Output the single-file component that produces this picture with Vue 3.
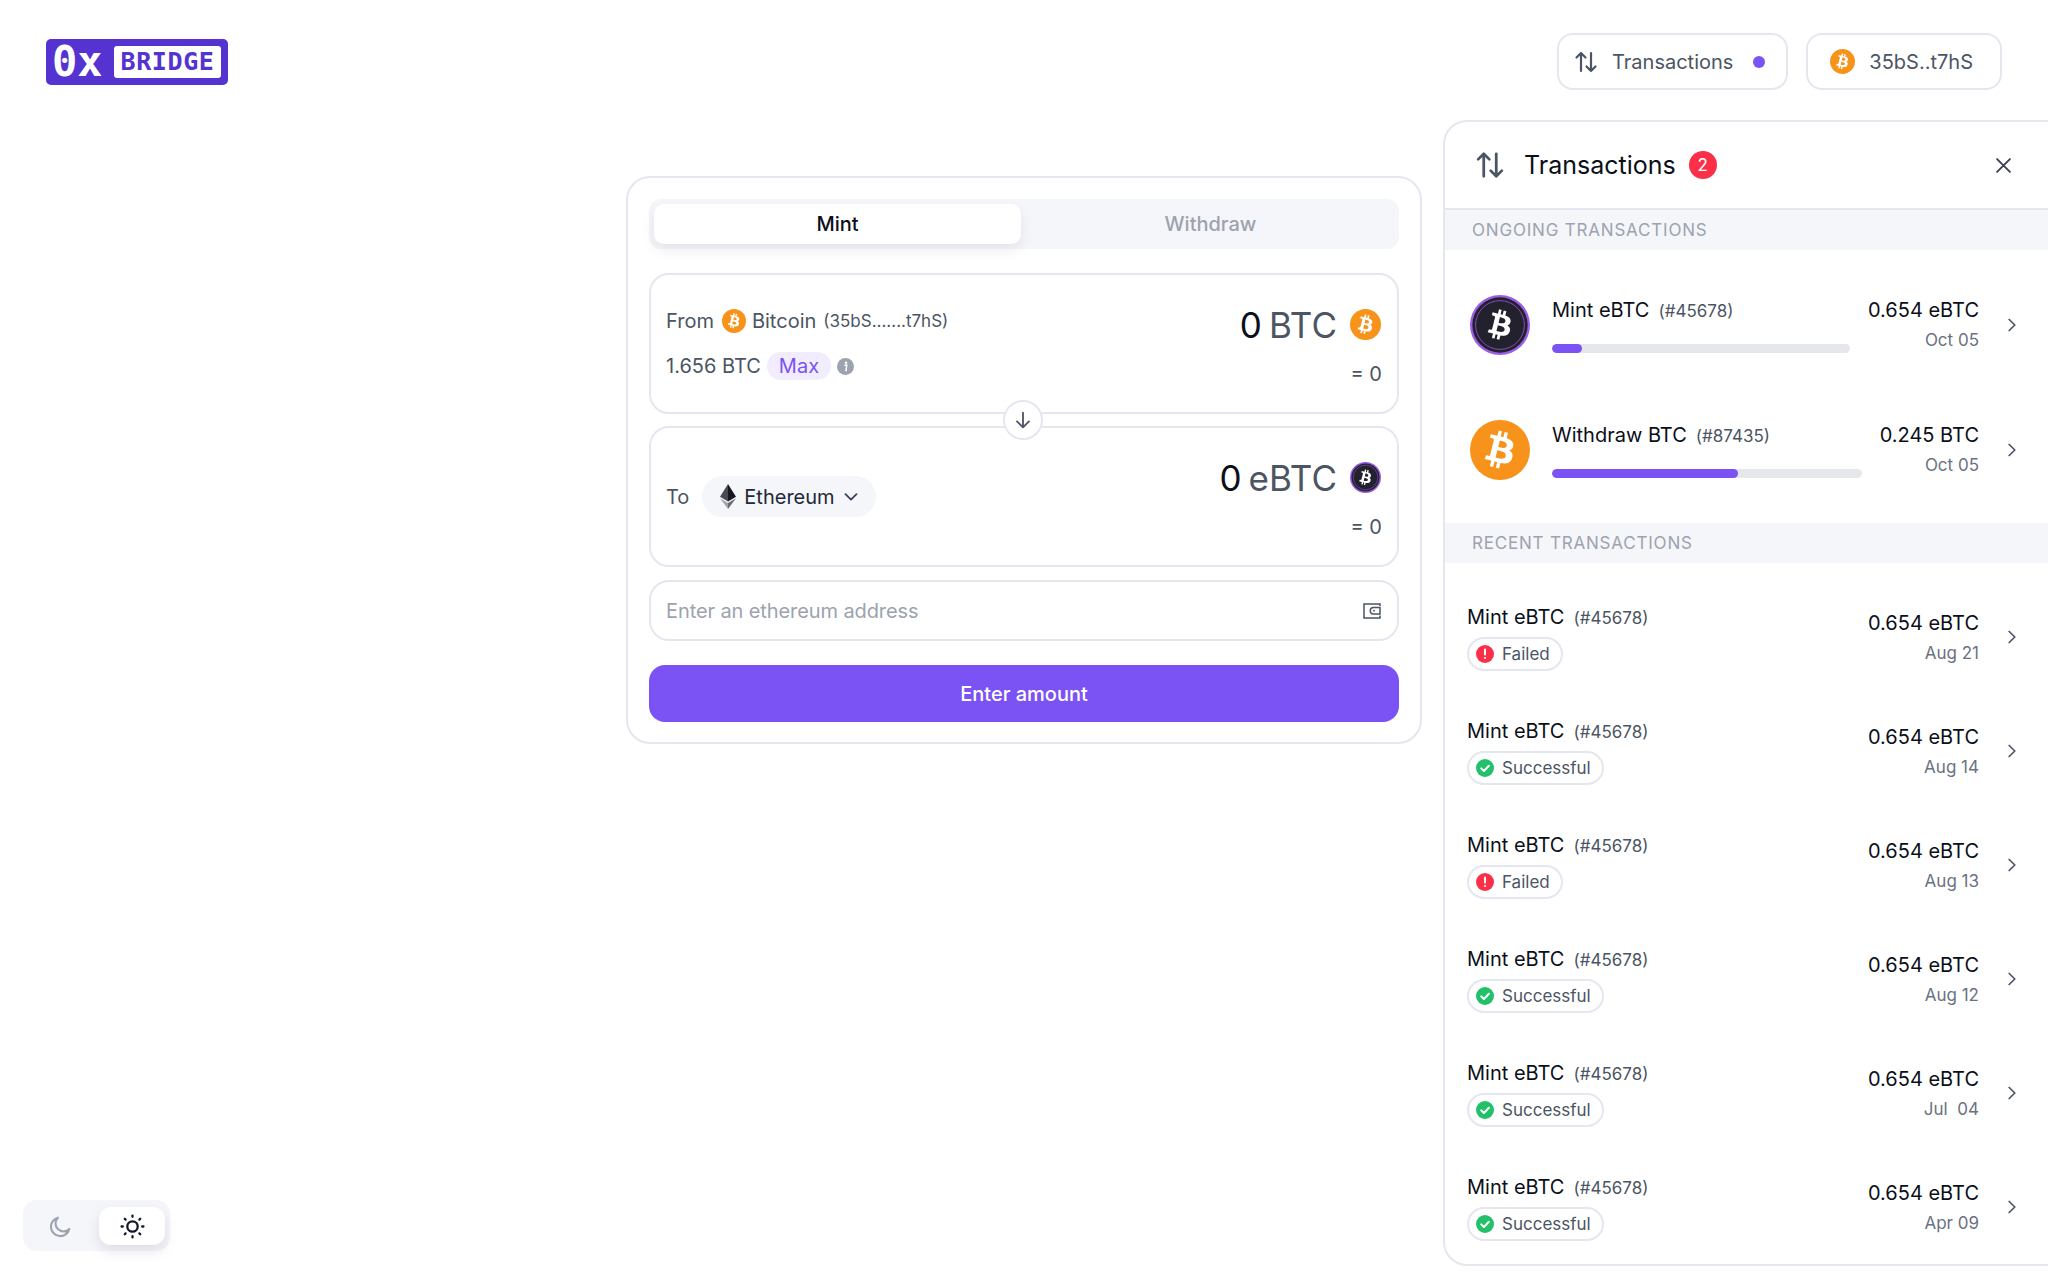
<script setup>
const btcMark = 'M46.11 27.441c.636-4.258-2.606-6.547-7.039-8.074l1.438-5.768-3.512-.875-1.4 5.616c-.922-.23-1.87-.447-2.812-.662l1.41-5.653-3.509-.875-1.439 5.766c-.764-.174-1.514-.346-2.242-.527l.004-.018-4.842-1.209-.934 3.75s2.605.597 2.55.634c1.422.355 1.68 1.296 1.636 2.042l-1.638 6.571c.098.025.225.061.365.117l-.37-.092-2.297 9.205c-.174.432-.615 1.08-1.609.834.035.051-2.552-.637-2.552-.637l-1.743 4.02 4.57 1.139c.85.213 1.683.436 2.502.646l-1.453 5.835 3.507.875 1.44-5.772c.957.26 1.887.5 2.797.726L27.504 50.8l3.511.875 1.453-5.823c5.987 1.133 10.49.676 12.383-4.738 1.527-4.36-.075-6.875-3.225-8.516 2.294-.531 4.022-2.04 4.483-5.157zM38.087 38.69c-1.086 4.36-8.426 2.004-10.807 1.412l1.928-7.729c2.38.594 10.011 1.77 8.88 6.317zm1.085-11.312c-.99 3.966-7.1 1.951-9.083 1.457l1.748-7.01c1.983.494 8.367 1.416 7.335 5.553z'

const ongoing = [
  { id: 1, title: 'Mint eBTC', ref: '(#45678)', amount: '0.654 eBTC', date: 'Oct 05', progress: 10, coin: 'ebtc' },
  { id: 2, title: 'Withdraw BTC', ref: '(#87435)', amount: '0.245 BTC', date: 'Oct 05', progress: 60, coin: 'btc' }
]

const recent = [
  { id: 1, status: 'Failed', date: 'Aug 21' },
  { id: 2, status: 'Successful', date: 'Aug 14' },
  { id: 3, status: 'Failed', date: 'Aug 13' },
  { id: 4, status: 'Successful', date: 'Aug 12' },
  { id: 5, status: 'Successful', date: 'Jul  04' },
  { id: 6, status: 'Successful', date: 'Apr 09' }
]
</script>

<template>
  <div class="page">
    <header class="topbar">
      <div class="logo">
        <span class="logo-mark">0x</span>
        <span class="logo-word">BRIDGE</span>
      </div>
      <div class="topbar-actions">
        <button class="top-btn">
          <svg class="arrows-sm" viewBox="0 0 24 24" fill="none" stroke="currentColor" stroke-width="2.2" stroke-linecap="round" stroke-linejoin="round">
            <path d="M7 21V3M2.5 7.5 7 3l4.5 4.5M17 3v18M12.5 16.5 17 21l4.5-4.5" />
          </svg>
          <span class="top-label">Transactions</span>
          <span class="top-dot"></span>
        </button>
        <button class="top-btn wallet-btn">
          <svg class="coin-25" viewBox="0 0 64 64"><circle cx="32" cy="32" r="32" fill="#f7931a" /><path :d="btcMark" fill="#fff" /></svg>
          <span>35bS..t7hS</span>
        </button>
      </div>
    </header>

    <main class="main">
      <section class="card">
        <div class="tabs">
          <div class="tab is-active">Mint</div>
          <div class="tab">Withdraw</div>
        </div>

        <div class="box">
          <div class="box-left">
            <div class="line">
              <span>From</span>
              <svg class="from-coin" viewBox="0 0 64 64"><circle cx="32" cy="32" r="32" fill="#f7931a" /><path :d="btcMark" fill="#fff" /></svg>
              <span>Bitcoin</span>
              <span class="addr">(35bS.......t7hS)</span>
            </div>
            <div class="line balance">
              <span>1.656 BTC</span>
              <span class="max">Max</span>
              <svg class="info" viewBox="0 0 20 20">
                <circle cx="10" cy="10" r="10" fill="#9ca3af" />
                <circle cx="10.6" cy="5.6" r="1.5" fill="#fff" />
                <path d="M8.6 8.6h2.9l-1 6.2h1.1" fill="none" stroke="#fff" stroke-width="1.7" />
              </svg>
            </div>
          </div>
          <div class="box-right">
            <div class="value">
              <b>0</b><span>BTC</span>
              <svg class="coin-30" viewBox="0 0 64 64"><circle cx="32" cy="32" r="32" fill="#f7931a" /><path :d="btcMark" fill="#fff" /></svg>
            </div>
            <div class="approx">= 0</div>
          </div>
        </div>

        <div class="swap-wrap">
          <div class="swap">
            <svg viewBox="0 0 24 24" fill="none" stroke="#4b5563" stroke-width="2" stroke-linecap="round" stroke-linejoin="round">
              <path d="M12 4v16M5.5 13.5 12 20l6.5-6.5" />
            </svg>
          </div>
        </div>

        <div class="box">
          <div class="line to-line">
            <span>To</span>
            <div class="chain">
              <svg class="eth" viewBox="0 0 16 25">
                <path d="M8 0 0 12.7l8 4.7z" fill="#4a4a55" />
                <path d="M8 0l8 12.7-8 4.7z" fill="#17171f" />
                <path d="M0 14.3 8 25v-6z" fill="#a3a3ad" />
                <path d="M16 14.3 8 25v-6z" fill="#6b6b76" />
              </svg>
              <span>Ethereum</span>
              <svg class="chev-down" viewBox="0 0 14 8" fill="none" stroke="#374151" stroke-width="1.8" stroke-linecap="round" stroke-linejoin="round">
                <path d="M1.5 1.2 7 6.6l5.5-5.4" />
              </svg>
            </div>
          </div>
          <div class="box-right">
            <div class="value">
              <b>0</b><span>eBTC</span>
              <svg class="coin-30" viewBox="0 0 64 64">
                <circle cx="32" cy="32" r="32" fill="#9b5de5" />
                <circle cx="32" cy="32" r="29" fill="#24212f" />
                <circle cx="32" cy="32" r="25.5" fill="none" stroke="#9b5de5" stroke-width="1" />
                <path :d="btcMark" fill="#fff" transform="translate(6.4 6.4) scale(.8)" />
              </svg>
            </div>
            <div class="approx">= 0</div>
          </div>
        </div>

        <div class="address">
          <span class="placeholder">Enter an ethereum address</span>
          <svg class="wallet" viewBox="0 0 18 16" fill="none" stroke="#4b5563" stroke-width="1.5">
            <path d="M17 3V1H1v14h16v-2.5M17 4.5H10.5a3.2 3.2 0 0 0 0 6.5H17z" />
            <circle cx="11" cy="7.7" r=".9" fill="#4b5563" stroke="none" />
          </svg>
        </div>

        <button class="submit">Enter amount</button>
      </section>
    </main>

    <aside class="panel">
      <div class="panel-head">
        <svg class="arrows-lg" viewBox="0 0 24 24" fill="none" stroke="#4b5563" stroke-width="2.2" stroke-linecap="round" stroke-linejoin="round">
          <path d="M7 21V3M2.5 7.5 7 3l4.5 4.5M17 3v18M12.5 16.5 17 21l4.5-4.5" />
        </svg>
        <span class="panel-title">Transactions</span>
        <span class="badge">2</span>
        <svg class="close" viewBox="0 0 14 14" fill="none" stroke="#374151" stroke-width="1.7" stroke-linecap="round">
          <path d="M1 1l12 12M13 1 1 13" />
        </svg>
      </div>

      <div class="section-label">Ongoing transactions</div>
      <div class="ongoing">
        <div v-for="tx in ongoing" :key="tx.id" class="ongoing-row">
          <svg class="coin-60" viewBox="0 0 64 64">
            <template v-if="tx.coin === 'ebtc'">
              <circle cx="32" cy="32" r="32" fill="#9b5de5" />
              <circle cx="32" cy="32" r="29.5" fill="#24212f" />
              <circle cx="32" cy="32" r="26" fill="none" stroke="#9b5de5" stroke-width=".8" />
              <path :d="btcMark" fill="#fff" transform="translate(6.4 6.4) scale(.8)" />
            </template>
            <template v-else>
              <circle cx="32" cy="32" r="32" fill="#f7931a" />
              <path :d="btcMark" fill="#fff" />
            </template>
          </svg>
          <div class="ongoing-main">
            <div class="tx-title">
              <span>{{ tx.title }}</span>
              <span class="tx-ref">{{ tx.ref }}</span>
            </div>
            <div class="bar"><div class="bar-fill" :style="{ width: tx.progress + '%' }"></div></div>
          </div>
          <div class="tx-side">
            <div class="tx-amount">{{ tx.amount }}</div>
            <div class="tx-date">{{ tx.date }}</div>
          </div>
          <svg class="chev" viewBox="0 0 8 14" fill="none" stroke="#4b5563" stroke-width="1.7" stroke-linecap="round" stroke-linejoin="round">
            <path d="M1.2 1.5 6.8 7l-5.6 5.5" />
          </svg>
        </div>
      </div>

      <div class="section-label">Recent transactions</div>
      <div class="recent">
        <div v-for="tx in recent" :key="tx.id" class="recent-row">
          <div class="recent-main">
            <div class="tx-title">
              <span>Mint eBTC</span>
              <span class="tx-ref">(#45678)</span>
            </div>
            <div class="status">
              <svg v-if="tx.status === 'Failed'" class="status-icon" viewBox="0 0 18 18">
                <circle cx="9" cy="9" r="9" fill="#fb3048" />
                <path d="M9 4.6v5" stroke="#fff" stroke-width="2" stroke-linecap="round" />
                <circle cx="9" cy="13" r="1.1" fill="#fff" />
              </svg>
              <svg v-else class="status-icon" viewBox="0 0 18 18">
                <circle cx="9" cy="9" r="9" fill="#22c069" />
                <path d="M5.2 9.4 7.9 12l5-5.2" fill="none" stroke="#fff" stroke-width="2" stroke-linecap="round" stroke-linejoin="round" />
              </svg>
              <span>{{ tx.status }}</span>
            </div>
          </div>
          <div class="tx-side">
            <div class="tx-amount">0.654 eBTC</div>
            <div class="tx-date">{{ tx.date }}</div>
          </div>
          <svg class="chev" viewBox="0 0 8 14" fill="none" stroke="#4b5563" stroke-width="1.7" stroke-linecap="round" stroke-linejoin="round">
            <path d="M1.2 1.5 6.8 7l-5.6 5.5" />
          </svg>
        </div>
      </div>
    </aside>

    <div class="theme">
      <div class="theme-opt">
        <svg viewBox="0 0 24 24" fill="none" stroke="#9ca3af" stroke-width="2" stroke-linecap="round" stroke-linejoin="round">
          <path d="M20.5 14.5A9 9 0 1 1 9.5 3.5a7.5 7.5 0 0 0 11 11z" />
        </svg>
      </div>
      <div class="theme-opt is-active">
        <svg viewBox="0 0 24 24" fill="none" stroke="#111827" stroke-width="2.2" stroke-linecap="round">
          <circle cx="12" cy="12" r="5" />
          <path d="M12 1.5v1.2M12 21.3v1.2M1.5 12h1.2M21.3 12h1.2M4.6 4.6l.8.8M18.6 18.6l.8.8M4.6 19.4l.8-.8M18.6 5.4l.8-.8" />
        </svg>
      </div>
    </div>
  </div>
</template>

<style>
html,
body {
  margin: 0;
  background: #fff;
}
</style>

<style scoped>
.page {
  position: relative;
  height: 1280px;
  overflow: hidden;
  font-family: Inter, "Noto Sans", sans-serif;
  font-size: 20px;
  color: #4b5563;
}

.topbar {
  height: 120px;
  box-sizing: border-box;
  padding: 3px 46px 0 46px;
  display: flex;
  align-items: center;
  justify-content: space-between;
}

.logo {
  display: flex;
  align-items: center;
  justify-content: space-between;
  box-sizing: border-box;
  width: 182px;
  height: 46px;
  padding: 0 7px 0 6px;
  background: #5433d0;
  border-radius: 5px;
  font-family: "DejaVu Sans Mono", monospace;
  font-weight: 700;
}

.logo-mark {
  color: #fff;
  font-size: 42px;
  line-height: 46px;
}

.logo-word {
  width: 107px;
  height: 32px;
  background: #fff;
  border-radius: 3px;
  color: #5433d0;
  font-size: 25px;
  line-height: 32px;
  text-align: center;
  letter-spacing: 0.6px;
}

.topbar-actions {
  display: flex;
  gap: 18px;
}

.top-btn {
  display: flex;
  align-items: center;
  box-sizing: border-box;
  height: 57px;
  padding: 0 21px 0 15px;
  background: #fff;
  border: 2px solid #e5e7ef;
  border-radius: 16px;
  font: inherit;
  color: #4b5563;
}

.arrows-sm {
  width: 24px;
  height: 24px;
}

.top-label {
  margin-left: 14px;
}

.top-dot {
  width: 12px;
  height: 12px;
  margin-left: 20px;
  border-radius: 50%;
  background: #7b52f4;
}

.wallet-btn {
  gap: 14px;
  padding: 0 27px 0 22px;
}

.coin-25 {
  width: 25px;
  height: 25px;
  flex: none;
}

.coin-30 {
  width: 31px;
  height: 31px;
  margin-left: 13px;
  flex: none;
}

.coin-60 {
  width: 60px;
  height: 60px;
  flex: none;
}

.main {
  display: flex;
  justify-content: center;
  padding-top: 56px;
}

.card {
  width: 796px;
  box-sizing: border-box;
  padding: 21px 21px 20px;
  background: #fff;
  border: 2px solid #e5e7ef;
  border-radius: 24px;
  display: flex;
  flex-direction: column;
}

.tabs {
  display: flex;
  height: 50px;
  box-sizing: border-box;
  padding: 5px;
  background: #f5f6fa;
  border-radius: 12px;
  margin-bottom: 24px;
}

.tab {
  flex: 1;
  display: flex;
  align-items: center;
  justify-content: center;
  padding-left: 6px;
  border-radius: 10px;
  color: #9ca3af;
  font-weight: 500;
}

.tab.is-active {
  flex: 0 0 367px;
  padding-left: 0;
  background: #fff;
  color: #0b0f19;
  box-shadow: 0 6px 14px rgba(17, 24, 39, 0.08);
}

.box {
  height: 141px;
  box-sizing: border-box;
  padding: 0 16px 0 15px;
  border: 2px solid #e5e7ef;
  border-radius: 20px;
  display: flex;
  align-items: center;
  justify-content: space-between;
}

.line {
  display: flex;
  align-items: center;
  line-height: 28px;
}

.from-coin {
  width: 24px;
  height: 24px;
  margin: 0 6px 0 8px;
}

.addr {
  margin-left: 7px;
  font-size: 17px;
}

.balance {
  margin-top: 17px;
}

.max {
  margin-left: 6px;
  padding: 0 12px;
  height: 28px;
  border-radius: 14px;
  background: #f1edfe;
  color: #7b52f4;
}

.info {
  width: 17px;
  height: 17px;
  margin-left: 6px;
}

.box-right {
  display: flex;
  flex-direction: column;
  align-items: flex-end;
  padding-top: 3px;
}

.value {
  display: flex;
  align-items: center;
  font-size: 35px;
  line-height: 44px;
}

.value b {
  font-weight: 400;
  color: #0b0f19;
  margin-right: 7px;
}

.approx {
  margin: 13px -1px 0 0;
  line-height: 28px;
}

.swap-wrap {
  position: relative;
  height: 12px;
}

.swap {
  position: absolute;
  left: 354px;
  top: -14px;
  width: 40px;
  height: 40px;
  box-sizing: border-box;
  background: #fff;
  border: 2px solid #e5e7ef;
  border-radius: 50%;
  display: flex;
  align-items: center;
  justify-content: center;
}

.swap svg {
  width: 22px;
  height: 22px;
}

.to-line {
  gap: 13px;
}

.chain {
  display: flex;
  align-items: center;
  height: 41px;
  padding: 0 18px;
  background: #f5f6fa;
  border-radius: 21px;
  color: #1f2937;
}

.eth {
  width: 16px;
  height: 25px;
  margin-right: 8px;
}

.chev-down {
  width: 14px;
  height: 8px;
  margin-left: 9px;
}

.address {
  margin: 13px 0 24px;
  height: 61px;
  box-sizing: border-box;
  padding: 0 16px 0 15px;
  border: 2px solid #e5e7ef;
  border-radius: 20px;
  display: flex;
  align-items: center;
  justify-content: space-between;
  color: #9ca3af;
}

.placeholder {
  letter-spacing: -0.1px;
}

.wallet {
  width: 18px;
  height: 16px;
}

.submit {
  height: 57px;
  border: 0;
  border-radius: 16px;
  background: #7b52f4;
  color: #fff;
  font: inherit;
  font-weight: 500;
}

.panel {
  position: absolute;
  top: 120px;
  right: 0;
  width: 605px;
  box-sizing: border-box;
  background: #fff;
  border: 2px solid #e5e7ef;
  border-right: 0;
  border-radius: 24px 0 0 24px;
}

.panel-head {
  display: flex;
  align-items: center;
  height: 86px;
  padding: 0 37px 0 30px;
  border-bottom: 2px solid #e5e7ef;
}

.arrows-lg {
  width: 30px;
  height: 30px;
}

.panel-title {
  margin-left: 19px;
  font-size: 25px;
  color: #0b0f19;
}

.badge {
  width: 28px;
  height: 28px;
  margin-left: 13px;
  border-radius: 50%;
  background: #fb3048;
  color: #fff;
  font-size: 17px;
  line-height: 28px;
  text-align: center;
}

.close {
  width: 15px;
  height: 15px;
  margin-left: auto;
}

.section-label {
  height: 40px;
  padding-left: 27px;
  background: #f5f6fa;
  color: #9ca3af;
  font-size: 17px;
  line-height: 40px;
  text-transform: uppercase;
  letter-spacing: 0.8px;
}

.ongoing {
  padding: 12px 32px 11px 25px;
}

.ongoing-row {
  display: flex;
  align-items: center;
  height: 125px;
}

.ongoing-main {
  flex: 1;
  margin: 0 18px 0 22px;
}

.tx-title {
  display: flex;
  align-items: baseline;
  gap: 9px;
  height: 28px;
  color: #0b0f19;
  line-height: 28px;
}

.tx-ref {
  font-size: 17px;
  color: #4b5563;
}

.bar {
  height: 9px;
  margin-top: 20px;
  border-radius: 5px;
  background: #e5e7eb;
  overflow: hidden;
}

.bar-fill {
  height: 100%;
  border-radius: 5px;
  background: #7b52f4;
}

.tx-side {
  text-align: right;
}

.tx-amount {
  color: #0b0f19;
  line-height: 28px;
}

.tx-date {
  margin-top: 4px;
  font-size: 17px;
  line-height: 25px;
  color: #6b7280;
  white-space: pre;
}

.chev {
  width: 8px;
  height: 14px;
  margin-left: 29px;
  flex: none;
}

.recent {
  padding: 17px 32px 0 22px;
}

.recent-row {
  display: flex;
  align-items: center;
  padding: 23px 0;
}

.recent-main {
  flex: 1;
}

.status {
  display: flex;
  align-items: center;
  gap: 8px;
  width: fit-content;
  height: 34px;
  box-sizing: border-box;
  margin-top: 6px;
  padding: 0 11px 0 7px;
  border: 2px solid #e5e7ef;
  border-radius: 17px;
  font-size: 17px;
}

.status-icon {
  width: 18px;
  height: 18px;
}

.theme {
  position: absolute;
  left: 23px;
  top: 1200px;
  display: flex;
  gap: 7px;
  box-sizing: border-box;
  width: 147px;
  height: 51px;
  padding: 7px 5px 6px 6px;
  background: #f5f6fa;
  border-radius: 14px;
}

.theme-opt {
  flex: 1;
  display: flex;
  align-items: center;
  justify-content: center;
  border-radius: 12px;
}

.theme-opt.is-active {
  flex: 0 0 66px;
  background: #fff;
  box-shadow: 0 6px 14px rgba(17, 24, 39, 0.1);
}

.theme-opt svg {
  width: 25px;
  height: 25px;
}
</style>
